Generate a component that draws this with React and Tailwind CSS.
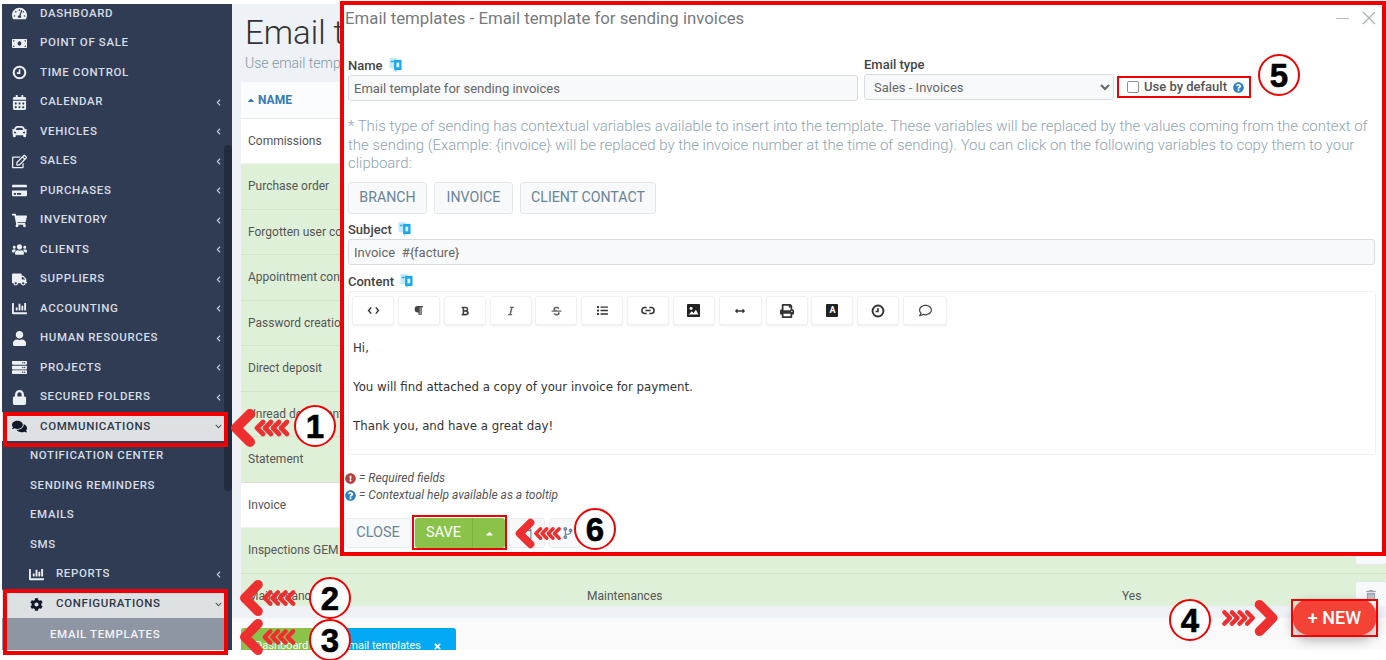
import React from "react";
import {
  FaTachometerAlt, FaMoneyBill, FaCalendarAlt, FaCar, FaRegEdit, FaCreditCard, FaShoppingCart,
  FaUsers, FaTruck, FaChartBar, FaUser, FaServer, FaLock, FaComments, FaCog, FaParagraph, FaBold,
  FaItalic, FaStrikethrough, FaList, FaArrowsAltH, FaPrint, FaRegComment, FaQuestionCircle,
  FaExclamationCircle, FaTrashAlt, FaChevronLeft, FaChevronDown, FaTimes, FaCaretUp, FaRegFile, FaCodeBranch,
} from "react-icons/fa";

const roboto = "font-['Roboto',sans-serif]";
const menuText = "text-[11.5px] font-medium uppercase tracking-[0.62px]";

function Clock({ className }) {
  return (
    <svg viewBox="0 0 16 16" className={className} fill="none" stroke="currentColor">
      <circle cx="8" cy="8" r="6.2" strokeWidth="2.2" />
      <path d="M8 4.5V8.6H5.2" strokeWidth="1.8" />
    </svg>
  );
}

function MenuRow({ icon: Icon, label, chevron, active }) {
  return (
    <div className={`flex h-[29.5px] items-center ${active ? "mr-[8px] bg-[#dde1e4] text-[#2d3748]" : "text-[#d7dde5]"}`}>
      {Icon ? (
        <span className="flex w-[38px] shrink-0 justify-center pr-[4px]">
          <Icon className={`h-[15px] w-[15px] ${active ? "text-[#111827]" : "text-[#eef1f4]"}`} />
        </span>
      ) : (
        <span className="w-[28px] shrink-0" />
      )}
      <span className={`flex-1 ${menuText}`}>{label}</span>
      {chevron === "left" && <FaChevronLeft className="mr-[10px] h-[7px] w-[7px] text-[#c9d0d9]" />}
      {chevron === "down" && <FaChevronDown className="mr-[2px] h-[7px] w-[7px] text-[#4b5563]" />}
    </div>
  );
}

function Sidebar() {
  const top = [
    [FaTachometerAlt, "Dashboard"],
    [FaMoneyBill, "Point of sale"],
    [Clock, "Time control"],
    [FaCalendarAlt, "Calendar", "left"],
    [FaCar, "Vehicles", "left"],
    [FaRegEdit, "Sales", "left"],
    [FaCreditCard, "Purchases", "left"],
    [FaShoppingCart, "Inventory", "left"],
    [FaUsers, "Clients", "left"],
    [FaTruck, "Suppliers", "left"],
    [FaChartBar, "Accounting", "left"],
    [FaUser, "Human resources", "left"],
    [FaServer, "Projects", "left"],
    [FaLock, "Secured folders", "left"],
  ];
  return (
    <aside className="relative ml-[2px] h-[646px] w-[230px] shrink-0 overflow-hidden bg-[#2f3c54]">
      <div className="-mt-[5.25px]">
        {top.map(([I, l, c]) => (
          <MenuRow key={l} icon={I} label={l} chevron={c} />
        ))}
        <MenuRow icon={FaComments} label="Communications" chevron="down" active />
        {["Notification center", "Sending reminders", "Emails", "SMS"].map((l) => (
          <MenuRow key={l} label={l} />
        ))}
        <div className="flex h-[29.5px] items-center text-[#d7dde5]">
          <FaChartBar className="ml-[27px] h-[15px] w-[15px] text-[#eef1f4]" />
          <span className={`ml-[12px] flex-1 ${menuText}`}>Reports</span>
          <FaChevronLeft className="mr-[10px] h-[7px] w-[7px] text-[#c9d0d9]" />
        </div>
        <div className="mr-[8px] flex h-[29.5px] items-center border-t border-[#566276] bg-[#dde1e4] text-[#2d3748]">
          <FaCog className="ml-[28px] h-[13px] w-[13px] text-[#111827]" />
          <span className={`ml-[13px] flex-1 ${menuText}`}>Configurations</span>
          <FaChevronDown className="mr-[2px] h-[7px] w-[7px] text-[#4b5563]" />
        </div>
        <div className={`mr-[8px] flex h-[32px] items-center bg-[#8e95a3] pl-[48px] text-[#f3f4f6] ${menuText}`}>
          Email templates
        </div>
      </div>
      <div className="absolute right-0 top-[141px] h-[346px] w-[8px] rounded-full bg-[#222c3e]" />
    </aside>
  );
}

const rows = [
  ["Commissions", "w"],
  ["Purchase order", "g"],
  ["Forgotten user code", "g"],
  ["Appointment confirmation", "g"],
  ["Password creation", "g"],
  ["Direct deposit", "g"],
  ["Unread documents", "g"],
  ["Statement", "g"],
  ["Invoice", "w"],
  ["Inspections GEM", "g"],
  ["Maintenances", "g", "Maintenances", "Yes"],
];

function Main() {
  return (
    <main className="flex h-[646px] flex-1 flex-col overflow-hidden bg-[#eef1f5]">
      <div className="h-[78px] shrink-0 pl-[13px] pt-[9px]">
        <div className="text-[33px] font-light leading-[40px] text-[#333]">Email templates</div>
        <div className="text-[14px] font-light leading-[20px] text-[#7f97a5]">Use email templates to send messages</div>
      </div>
      <div className="ml-[9px] h-[524px] shrink-0 overflow-hidden">
        <div className="flex h-[36.5px] items-center gap-[2px] border-b border-[#e5e7eb] bg-[#fbfcfd] pl-[5px] text-[12px] font-bold text-[#337ab7]">
          <FaCaretUp className="h-[10px] w-[10px]" />
          NAME
        </div>
        {rows.map(([n, c, t, y]) => (
          <div
            key={n}
            className={`relative flex h-[45.5px] items-center border-b text-[12px] text-[#555] ${c === "w" ? "border-[#f1f1f1] bg-white" : "border-[#d5e3cd] bg-[#dff0d8]"}`}
          >
            <span className="pl-[7px]">{n}</span>
            {t && <span className="absolute left-[346px]">{t}</span>}
            {y && <span className="absolute left-[881px]">{y}</span>}
            <span className="absolute left-[1114px] flex h-[30px] w-[32px] items-center justify-center rounded-[3px] border border-[#e5e7eb] bg-[#f8f9fa]">
              <FaTrashAlt className="h-[11px] w-[10px] text-[#9ca3af]" />
            </span>
          </div>
        ))}
      </div>
      <div className="mt-[12px] flex-1 bg-[#fafafa] pl-[9px] pt-[10px]">
        <div className="flex h-[36px] text-[11px] text-white">
          <div className="flex w-[100px] items-center rounded-tl-[3px] bg-[#8bc34a] pl-[14px]">Dashboard</div>
          <div className="flex w-[115px] items-center gap-[12px] rounded-tr-[3px] bg-[#03a9f4] pl-[1px]">
            Email templates
            <FaTimes className="h-[9px] w-[9px]" />
          </div>
        </div>
      </div>
    </main>
  );
}

function Translate({ className = "" }) {
  return (
    <svg viewBox="0 0 14 16" className={`ml-[3px] inline-block h-[15px] w-[13px] align-[-2px] ${className}`}>
      <rect x="0.5" y="1" width="7.5" height="11" fill="#c5e9fc" />
      <rect x="5.5" y="3" width="8" height="11" fill="#1aa7ec" />
      <path d="M8 14h-2.5l2.5 2z" fill="#7cc9f3" />
      <rect x="8" y="6" width="3" height="5" fill="#e6f6fe" />
      <rect x="2" y="4" width="3" height="1.5" fill="#1aa7ec" />
    </svg>
  );
}

function CodeIcon({ className }) {
  return (
    <svg viewBox="0 0 14 10" className={className} fill="none" stroke="currentColor" strokeWidth="1.6">
      <path d="M4.5 1.5L1.5 5l3 3.5M9.5 1.5l3 3.5-3 3.5" />
    </svg>
  );
}
function LinkIcon({ className }) {
  return (
    <svg viewBox="0 0 16 10" className={className} fill="none" stroke="currentColor" strokeWidth="1.7">
      <path d="M6.5 1.5H4.5a3.5 3.5 0 000 7h2M9.5 1.5h2a3.5 3.5 0 010 7h-2M5 5h6" />
    </svg>
  );
}
function ImageIcon({ className }) {
  return (
    <svg viewBox="0 0 16 16" className={className}>
      <rect width="16" height="16" rx="1" fill="#222" />
      <circle cx="5" cy="5.5" r="1.8" fill="#fff" />
      <path d="M2 13l4-4 2 2 3-4 3 6z" fill="#fff" />
    </svg>
  );
}

const tools = [
  [CodeIcon, 42, "h-[9px] w-[13px]"], [FaParagraph, 42, "h-[11px] w-[9px] text-[#444]"], [FaBold, 42, "h-[10px] w-[8px] text-[#444]"],
  [FaItalic, 42, "h-[10px] w-[6px] text-[#666]"], [FaStrikethrough, 42, "h-[10px] w-[11px] text-[#666]"], [FaList, 42, "h-[11px] w-[13px]"],
  [LinkIcon, 42, "h-[9px] w-[14px]"], [ImageIcon, 42, "h-[13px] w-[13px]"], [FaArrowsAltH, 43, "h-[10px] w-[16px]"],
  [FaPrint, 42, "h-[14px] w-[14px]"], ["A", 42, ""], [Clock, 42, "h-[14px] w-[14px]"], [FaRegComment, 44, "h-[13px] w-[15px] text-[#444]"],
];

function Modal() {
  return (
    <div className="absolute left-[340px] top-[1px] flex h-[555px] w-[1046px] flex-col bg-white">
      <div className="flex h-[34px] shrink-0 items-center justify-between pl-[5px] pr-[10px]">
        <span className="text-[16.8px] leading-[20px] text-[#777b7e]">Email templates - Email template for sending invoices</span>
        <span className="flex items-center gap-[13px] text-[#b4bac0]">
          <span className="block h-[1px] w-[13px] bg-[#b4bac0]" />
          <FaTimesThin />
        </span>
      </div>
      <div className="mt-[22px] flex pl-[8px]">
        <div className="w-[510px]">
          <div className="text-[13px] font-medium leading-[16px] text-[#444]">
            Name <Translate />
          </div>
          <input
            readOnly
            value="Email template for sending invoices"
            className="mt-[1px] block h-[26px] w-full rounded-[3px] border border-[#d9dcdf] bg-[#f8f9fa] px-[5px] text-[13px] text-[#666] outline-none"
          />
        </div>
        <div className="ml-[6px] w-[250px]">
          <div className="text-[13px] font-medium leading-[16px] text-[#444]">Email type</div>
          <select
            defaultValue="a"
            className="mt-[1px] block h-[26px] w-full rounded-[3px] border border-[#d9dcdf] bg-[#f8f9fa] px-[5px] text-[13px] text-[#666] outline-none"
          >
            <option value="a">Sales - Invoices</option>
          </select>
        </div>
        <div className="ml-[13px] mt-[17px] flex h-[26px] items-center">
          <span className="h-[12px] w-[12px] rounded-[2px] border border-[#8b8f94] bg-white" />
          <span className="ml-[5px] text-[13px] font-medium text-[#555]">Use by default</span>
          <FaQuestionCircle className="ml-[6px] h-[11px] w-[11px] text-[#2f7fc1]" />
        </div>
      </div>
      <p className="mt-[16px] w-[1033px] pl-[8px] text-[14.95px] font-light leading-[18.7px] text-[#8ea4b1]">
        * This type of sending has contextual variables available to insert into the template. These variables will be replaced by the values coming from the context of the sending (Example: {"{invoice}"} will be replaced by the invoice number at the time of sending). You can click on the following variables to copy them to your clipboard:
      </p>
      <div className="mt-[9px] flex gap-[7px] pl-[8px]">
        {[["BRANCH", 79], ["INVOICE", 79], ["CLIENT CONTACT", 136]].map(([t, w]) => (
          <span
            key={t}
            style={{ width: w }}
            className="flex h-[32px] items-center justify-center rounded-[3px] border border-[#e3e7ea] bg-[#f7f9fa] text-[14.2px] text-[#6a8494]"
          >
            {t}
          </span>
        ))}
      </div>
      <div className="mt-[7px] pl-[8px] text-[13px] font-medium leading-[16px] text-[#444]">
        Subject <Translate />
      </div>
      <input
        readOnly
        value="Invoice  #{facture}"
        className="ml-[8px] mt-[1px] block h-[26px] w-[1027px] shrink-0 rounded-[3px] border border-[#d9dcdf] bg-[#f8f9fa] px-[5px] text-[13px] text-[#666] outline-none"
      />
      <div className="mt-[8px] pl-[8px] text-[13px] font-medium leading-[16px] text-[#444]">
        Content <Translate />
      </div>
      <div className="ml-[8px] mt-[1px] h-[164px] w-[1028px] shrink-0 rounded-[3px] border border-[#f0f1f2] pl-[3px] pt-[4px]">
        <div className="flex gap-[3.85px]">
          {tools.map(([I, w, cls], i) => (
            <span
              key={i}
              style={{ width: w }}
              className="flex h-[29px] items-center justify-center rounded-[3px] border border-[#f1f1f1] bg-white text-[#333] shadow-[0_1px_2px_rgba(0,0,0,0.08)]"
            >
              {I === "A" ? (
                <span className="flex h-[13px] w-[12px] items-center justify-center rounded-[1px] bg-[#222] text-[9px] font-bold text-white">A</span>
              ) : (
                <I className={cls} />
              )}
            </span>
          ))}
        </div>
        <div className="ml-[1px] mt-[4px] text-[11.8px] leading-[39px] text-[#333] [font-family:'DejaVu_Sans',sans-serif]">
          <div>Hi,</div>
          <div>You will find attached a copy of your invoice for payment.</div>
          <div>Thank you, and have a great day!</div>
        </div>
      </div>
      <div className="mt-[15px] pl-[5px] text-[12px] italic leading-[17px] text-[#555]">
        <div className="flex items-center gap-[3px]">
          <FaExclamationCircle className="h-[11px] w-[11px] text-[#b5423f]" /> = Required fields
        </div>
        <div className="flex items-center gap-[3px]">
          <FaQuestionCircle className="h-[11px] w-[11px] text-[#2f7fc1]" /> = Contextual help available as a tooltip
        </div>
      </div>
      <div className="mt-[14px] flex h-[30px] pl-[5px]">
        <span className="flex w-[66px] items-center justify-center rounded-[3px] border border-[#e9edf0] bg-[#f7f9fa] text-[14.5px] text-[#6a8494]">CLOSE</span>
        <span className="ml-[4px] flex w-[90px] rounded-[3px] bg-[#8bc34a] text-white">
          <span className="flex w-[58px] items-center justify-center border-r border-[#7cb342] text-[14.5px]">SAVE</span>
          <span className="flex flex-1 items-center justify-center">
            <FaCaretUp className="h-[11px] w-[11px]" />
          </span>
        </span>
        <span className="ml-[4px] flex w-[36px] items-center justify-center rounded-[3px] border border-[#e9edf0] bg-[#f7f9fa]">
          <FaRegFile className="h-[12px] w-[12px] text-[#6a8494]" />
        </span>
        <span className="ml-[4px] flex w-[31px] items-center justify-end rounded-[3px] border border-[#e9edf0] bg-[#f7f9fa] pr-[5px]">
          <FaCodeBranch className="h-[12px] w-[12px] text-[#6a8494]" />
        </span>
      </div>
    </div>
  );
}

function FaTimesThin() {
  return (
    <svg viewBox="0 0 14 14" className="h-[14px] w-[14px]" fill="none" stroke="#aab1b7" strokeWidth="1.3">
      <path d="M1 1l12 12M13 1L1 13" />
    </svg>
  );
}

function Arrow({ className }) {
  const smalls = [27, 35, 43, 51];
  return (
    <svg viewBox="0 0 62 40" className={`absolute ${className}`} fill="none" stroke="#ee2f2f" strokeLinecap="round" strokeLinejoin="round">
      <polyline points="20,6 6,20 20,34" strokeWidth="10" />
      {smalls.map((x) => (
        <polyline key={x} points={`${x + 6},14 ${x},20 ${x + 6},26`} strokeWidth="4.6" />
      ))}
    </svg>
  );
}

function Num({ n, className }) {
  return (
    <div className={`absolute flex h-[42px] w-[42px] items-center justify-center rounded-full border-[2.5px] border-[#f00000] bg-white text-[33px] font-bold leading-none text-black [-webkit-text-stroke:0.6px_black] [font-family:'Liberation_Sans',sans-serif] ${className}`}>
      {n}
    </div>
  );
}

function Frame({ className }) {
  return <div className={`pointer-events-none absolute border-[#f00000] ${className}`} />;
}

export default function App() {
  return (
    <div className={`relative flex h-[660px] w-[1386px] overflow-hidden bg-white pt-[4px] ${roboto}`}>
      <Sidebar />
      <Main />
      <Modal />

      <Frame className="left-[340px] top-[1px] h-[555px] w-[1046px] border-[4px]" />
      <Frame className="left-[3px] top-[412px] h-[35px] w-[225px] border-[4px]" />
      <Frame className="left-[3px] top-[589px] h-[66px] w-[225px] border-[4px]" />
      <Frame className="left-[1117px] top-[76px] h-[22px] w-[134px] border-[2px]" />
      <Frame className="left-[412px] top-[515px] h-[35px] w-[95px] border-[2px]" />

      <Arrow className="left-[230px] top-[408px] h-[40px] w-[62px]" />
      <Arrow className="left-[239px] top-[579px] h-[38px] w-[59px]" />
      <Arrow className="left-[239px] top-[618px] h-[38px] w-[59px]" />
      <Arrow className="left-[513px] top-[518px] h-[31px] w-[52px]" />
      <Arrow className="left-[1218px] top-[599px] h-[38px] w-[62px] -scale-x-100" />

      <Num n="1" className="left-[294px] top-[405px]" />
      <Num n="2" className="left-[309px] top-[577px]" />
      <Num n="3" className="left-[309px] top-[619px]" />
      <Num n="4" className="left-[1169px] top-[599px]" />
      <Num n="5" className="left-[1258px] top-[54px]" />
      <Num n="6" className="left-[574px] top-[508px]" />

      <div className="absolute left-[1293px] top-[599px] flex h-[36px] w-[83px] items-center justify-center rounded-[16px] bg-[#f44336] text-[18px] font-medium text-white shadow-[0_5px_12px_rgba(0,0,0,0.3)]">
        + NEW
      </div>
      <Frame className="left-[1291px] top-[599px] h-[38px] w-[87px] border-[2px]" />
    </div>
  );
}
